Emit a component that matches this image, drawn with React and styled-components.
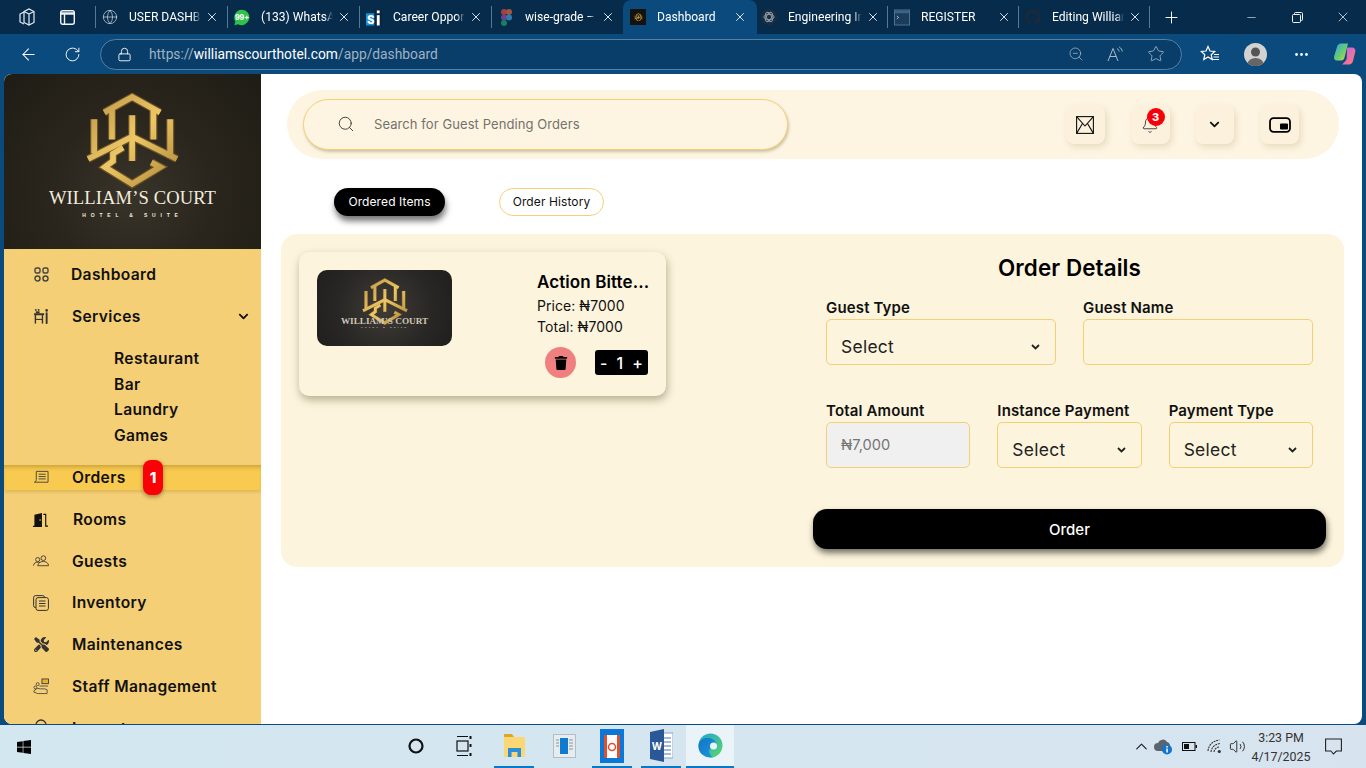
import React from "react";
import styled, { createGlobalStyle } from "styled-components";
import { ArrowLeft, RotateCw, Lock, ZoomOut, Star, Plus, X, Minus, Search, Bell, ChevronUp, Volume2, Globe, Ellipsis } from "lucide-react";
import { FaChevronDown, FaTrash, FaTools, FaWindows, FaGithub } from "react-icons/fa";

const Global = createGlobalStyle`
  html, body { margin: 0; padding: 0; height: 100%; overflow: hidden; }
  * { box-sizing: border-box; }
  body { font-family: Inter, "Liberation Sans", sans-serif; color: #000; }
`;

const Screen = styled.div`
  width: 1366px; height: 768px; display: flex; flex-direction: column; overflow: hidden;
`;

/* ---------- browser chrome ---------- */
const TabStrip = styled.div`
  height: 34px; background: #072b4b; display: flex; align-items: center; color: #fff; flex: none;
`;
const StripTool = styled.div`
  width: ${p => p.$w}px; height: 34px; flex: none; display: flex; align-items: center; justify-content: center;
`;
const Tab = styled.div`
  width: ${p => p.$w}px; height: ${p => (p.$active ? 34 : 22)}px; flex: none;
  display: flex; align-items: center; padding-left: ${p => (p.$active ? 7 : p.$plain ? 4 : 6)}px;
  background: ${p => (p.$active ? "#0b4a7c" : "transparent")};
  border-left: ${p => (p.$active || p.$plain ? "none" : "1px solid #557a98")};
  border-radius: ${p => (p.$active ? "8px 8px 0 0" : "0")};
  font: 12.1px Roboto, sans-serif;
`;
const TabIcon = styled.div`
  width: 16px; height: 16px; flex: none; display: flex; align-items: center; justify-content: center;
  background: ${p => (p.$dark ? "#14120e" : "transparent")};
`;
const TabTitle = styled.div`
  margin-left: 11px; width: ${p => (p.$plain ? 74 : 72)}px; flex: none; white-space: nowrap; overflow: hidden;
  -webkit-mask-image: linear-gradient(90deg, #000 88%, transparent);
  mask-image: linear-gradient(90deg, #000 88%, transparent);
`;
const TabClose = styled.div`
  margin-left: 4px; display: flex; color: #e8eef3;
`;
const NewTab = styled.div`
  width: 44px; height: 22px; flex: none; border-left: 1px solid #557a98; display: flex; align-items: center; justify-content: center;
`;
const WindowControls = styled.div`
  margin-left: auto; display: flex; flex: none;
`;
const WinBtn = styled.div`
  width: 46px; height: 34px; display: flex; align-items: center; justify-content: center; color: #f2f5f8;
`;
const Toolbar = styled.div`
  height: 40px; background: #0b4a7c; display: flex; align-items: center; color: #fff; flex: none;
`;
const ToolButton = styled.div`
  width: ${p => p.$w}px; flex: none; display: flex; justify-content: center; align-items: center; color: ${p => p.$c || "#fff"};
`;
const AddressBar = styled.div`
  width: 1082px; height: 31px; flex: none; border: 1px solid #55809f; border-radius: 16px; background: #093e6a;
  display: flex; align-items: center; padding-left: 16px; color: #c8d4dd;
`;
const Url = styled.div`
  margin-left: 17px; font: 13.8px Roboto, sans-serif; color: #9fb2c1; flex: 1;
  b { font-weight: 400; color: #fff; }
`;
const Avatar = styled.div`
  width: 23px; height: 23px; border-radius: 50%; background: #d2d2d2; overflow: hidden; display: flex;
`;

/* ---------- page ---------- */
const Viewport = styled.div`
  height: 651px; flex: none; background: #0b4a7c; padding: 0 4px 1px; display: flex;
`;
const Page = styled.div`
  flex: 1; background: #fff; display: flex; border-radius: 8px; overflow: hidden;
`;
const Sidebar = styled.aside`
  width: 257px; flex: none; background: #f5cf75; overflow: hidden; display: flex; flex-direction: column;
`;
const Brand = styled.div`
  height: 175px; flex: none; display: flex; flex-direction: column; align-items: center;
  background: radial-gradient(circle at 50% 68%, #39342a 0%, #2a261d 45%, #1f1c15 100%);
  padding-top: 15px; color: #f2ecdd;
`;
const BrandName = styled.div`
  font: 18.6px/20px "Liberation Serif", serif; margin-top: -2px; white-space: nowrap; letter-spacing: .1px;
`;
const BrandSub = styled.div`
  font: bold 5px/8px "Liberation Sans", sans-serif; letter-spacing: 4.8px; margin-top: 3px;
`;
const Nav = styled.nav`
  padding-top: 4px; display: flex; flex-direction: column; flex: none;
`;
const NavRow = styled.div`
  position: relative; flex: none; height: ${p => (p.$active ? "25px" : p.$tight ? "41.7px" : "42px")};
  margin: ${p => (p.$active ? "16px 0 9px" : "0")};
  display: flex; align-items: center; padding-left: 29px;
  background: ${p => (p.$active ? "#f8ca50" : "transparent")};
  box-shadow: ${p => (p.$active ? "inset 0 4px 4px -2px rgba(90,70,0,.3), 0 2px 3px rgba(120,90,0,.2)" : "none")};
`;
const NavIcon = styled.div`
  width: 16px; height: 18px; flex: none; display: flex; align-items: center; justify-content: center; color: #333;
`;
const NavLabel = styled.div`
  margin-left: ${p => p.$ml || 23}px; font-weight: 600; font-size: 15.6px; letter-spacing: .35px; white-space: nowrap; color: #111;
`;
const NavCaret = styled.div`
  margin-left: auto; margin-right: 12px; display: flex; color: #111;
`;
const SubList = styled.div`
  margin-top: 9px; padding-left: 110px; display: flex; flex-direction: column;
`;
const SubItem = styled.div`
  height: 25.7px; line-height: 25.7px; font-weight: 600; font-size: 15.6px; letter-spacing: .35px; color: #111;
`;
const NavBadge = styled.div`
  position: absolute; left: 139px; top: -5px; width: 20px; height: 35px; border-radius: 8px; background: #fb0007;
  color: #fff; font-weight: 800; font-size: 15px; display: flex; align-items: center; justify-content: center;
  box-shadow: 0 2px 4px rgba(60,40,0,.45);
`;

const Main = styled.main`
  flex: 1; min-width: 0; padding-top: 16px; display: flex; flex-direction: column;
`;
const TopBar = styled.div`
  width: 1052px; height: 69px; margin-left: 26px; flex: none; border-radius: 35px; background: #fdf5e2;
  display: flex; align-items: center; padding: 0 40px 0 16px;
`;
const SearchBox = styled.div`
  width: 485px; height: 51px; flex: none; border-radius: 26px; background: #fdf5e2; border: 1px solid #f5cf75;
  box-shadow: 1px 2px 3px rgba(120,100,50,.35); display: flex; align-items: center; padding: 0 0 1px 33px; color: #333;
`;
const SearchText = styled.div`
  margin-left: 19px; font-size: 13px; color: #74726c; letter-spacing: .08px;
`;
const TopIcons = styled.div`
  margin-left: auto; display: flex; gap: 25.7px;
`;
const TopIcon = styled.div`
  position: relative; width: 39px; height: 39px; border-radius: 8px; background: #fbf1dd;
  box-shadow: 2px 3px 6px rgba(160,130,70,.22); display: flex; align-items: center; justify-content: center; color: #111;
`;
const BellBadge = styled.div`
  position: absolute; right: 5px; top: 3px; width: 18px; height: 18px; border-radius: 50%; background: #f5010a;
  color: #fff; font-weight: 800; font-size: 11px; display: flex; align-items: center; justify-content: center;
`;
const Tabs = styled.div`
  margin-top: 29px; padding-left: 73px; display: flex; gap: 54px; flex: none;
`;
const TabPill = styled.div`
  height: 28px; width: ${p => p.$w}px; border-radius: 15px; font-size: 12px; padding-bottom: 2px; letter-spacing: .1px;
  display: flex; align-items: center; justify-content: center;
  background: ${p => (p.$on ? "#000" : "#fff")}; color: ${p => (p.$on ? "#fff" : "#111")};
  border: ${p => (p.$on ? "none" : "1px solid #f5cf75")};
  box-shadow: ${p => (p.$on ? "1px 5px 6px rgba(0,0,0,.55)" : "none")};
`;
const Panel = styled.section`
  width: 1063px; height: 333px; margin: 18px 0 0 20px; flex: none; background: #fcf4dc; border-radius: 16px;
  padding: 18px; display: flex; align-items: flex-start;
`;
const Card = styled.article`
  width: 367px; height: 144px; flex: none; background: #fcf4dc; border-radius: 10px; padding: 18px; display: flex;
  box-shadow: 1px 4px 8px rgba(70,60,30,.38);
`;
const Thumb = styled.div`
  width: 135px; height: 76px; flex: none; border-radius: 10px; color: #cfc7b6; overflow: hidden;
  background: radial-gradient(circle at 50% 50%, #3f3c38 0%, #292725 60%, #201f1d 100%);
  display: flex; flex-direction: column; align-items: center; padding-top: 6px;
`;
const ThumbName = styled.div`
  font: bold 9.2px/9px "Liberation Serif", serif; white-space: nowrap; margin-top: -9px;
`;
const ThumbSub = styled.div`
  font: bold 2.5px/4px "Liberation Sans", sans-serif; letter-spacing: 2.2px; margin-top: 0;
`;
const ItemInfo = styled.div`
  margin-left: 85px; width: 115px; flex: none; display: flex; flex-direction: column;
`;
const ItemName = styled.div`
  font-size: 17px; font-weight: 600; line-height: 25px; white-space: nowrap; letter-spacing: .1px;
`;
const ItemLine = styled.div`
  font-size: 14px; line-height: 21px; white-space: nowrap; color: #111; letter-spacing: .05px;
`;
const ItemActions = styled.div`
  margin-top: 10px; padding-left: 8px; display: flex; align-items: center; gap: 19px;
`;
const DeleteBtn = styled.div`
  width: 31px; height: 31px; flex: none; border-radius: 50%; background: #f07f7f; display: flex; align-items: center; justify-content: center; color: #000;
`;
const Stepper = styled.div`
  width: 53px; height: 25px; flex: none; border-radius: 3px; background: #000; color: #fff; font-size: 16px; font-weight: 500;
  display: flex; align-items: center; justify-content: space-between; padding: 0 5px;
`;
const OrderForm = styled.form`
  width: 513px; margin-left: 147px; flex: none; display: flex; flex-direction: column; margin-bottom: 0;
`;
const FormTitle = styled.h2`
  margin: 0 0 13px; font-size: 22.4px; line-height: 32px; font-weight: 600; text-align: center; letter-spacing: .1px;
`;
const FieldRow = styled.div`
  display: grid; grid-template-columns: repeat(${p => p.$cols}, 1fr); gap: 27px; padding: 0 13px; margin-bottom: ${p => p.$mb}px;
`;
const Field = styled.div`
  display: flex; flex-direction: column; min-width: 0;
`;
const FieldLabel = styled.div`
  height: 22px; font-size: 15px; line-height: 22.6px; font-weight: 600; white-space: nowrap; color: #111; letter-spacing: .15px;
`;
const SelectBox = styled.div`
  height: 46px; border: 1px solid #f5cf75; border-radius: 5px; display: flex; align-items: flex-end; justify-content: space-between;
  padding: 0 15px 5px 14px; font-size: 17.4px; line-height: 24px; color: #222; letter-spacing: .3px;
  svg { margin-bottom: 9px; }
`;
const TextBox = styled.div`
  height: 46px; border: 1px solid #f5cf75; border-radius: 5px; display: flex; align-items: center; padding-left: 14px;
  font-size: 14.6px; color: #757575; background: ${p => (p.$off ? "#f0f0f0" : "transparent")};
`;
const OrderBtn = styled.div`
  height: 40px; border-radius: 14px; background: #000; color: #fff; font-size: 15px; font-weight: 500;
  display: flex; align-items: center; justify-content: center; box-shadow: 1px 4px 6px rgba(0,0,0,.55);
`;

/* ---------- taskbar ---------- */
const Taskbar = styled.footer`
  height: 43px; flex: none; background: linear-gradient(90deg, #d2e7f0, #d7e4ef); display: flex; align-items: stretch; padding-left: 16px;
`;
const StartBtn = styled.div`
  width: 376px; flex: none; display: flex; align-items: center; color: #000;
`;
const Slot = styled.div`
  width: ${p => p.$w || 40}px; margin-left: ${p => p.$ml || 0}px; flex: none; display: flex; align-items: center; justify-content: center;
  border-bottom: 2px solid ${p => (p.$open ? "#0a78c8" : "transparent")};
  background: ${p => (p.$on ? "#eaf3f8" : "transparent")};
`;
const Tray = styled.div`
  margin-left: auto; padding-right: 20px; display: flex; align-items: center; color: #222;
`;
const TrayItem = styled.div`
  width: ${p => p.$w}px; flex: none; display: flex; justify-content: center; align-items: center;
`;
const Clock = styled.div`
  width: 78px; margin-left: -4px; flex: none; text-align: center; font: 12.4px/19px Roboto, sans-serif; color: #333;
`;

/* ---------- drawings ---------- */
const emblemPaths = [
  "M72 70 L155 24 L238 70",
  "M95 58 V150",
  "M218 58 V150",
  "M155 78 V214",
  "M42 90 V192",
  "M268 90 V204",
  "M24 208 L155 142 L288 208",
  "M128 174 L98 192 V214 L74 232 L155 282 L238 232 L212 218",
];
const Emblem = ({ size, id }) => (
  <svg width={size} height={size * 300 / 312} viewBox="0 0 312 300" fill="none">
    <defs>
      <linearGradient id={id} gradientUnits="userSpaceOnUse" x1="20" y1="20" x2="290" y2="290">
        <stop offset="0" stopColor="#b99449" />
        <stop offset=".5" stopColor="#edc765" />
        <stop offset="1" stopColor="#a98539" />
      </linearGradient>
    </defs>
    <g strokeLinejoin="miter" strokeLinecap="butt">
      {emblemPaths.map(d => <path key={d} d={d} stroke="#6d5222" strokeWidth="24" />)}
      {emblemPaths.map(d => <path key={d} d={d} stroke={`url(#${id})`} strokeWidth="17" />)}
    </g>
  </svg>
);

const TabX = () => <X size={14} strokeWidth={1.6} />;
const WhatsApp = () => (
  <svg width="17" height="17" viewBox="0 0 17 17"><path d="M8.500 .2a8.200 8.200 0 0 0-7 12.500L.4 16.800l4-1.100A8.200 8.200 0 1 0 8.500.2z" fill="#2fc24a" /><text x="8.500" y="11" fontSize="7.500" fontWeight="800" textAnchor="middle" fill="#fff" fontFamily="Inter">99+</text></svg>
);
const SiIcon = () => (
  <svg width="17" height="17" viewBox="0 0 17 17"><rect x="0" y="4" width="9" height="13" fill="#1b8fd6" /><rect x="9" y="0" width="8" height="17" fill="#0a2540" /><text x="1" y="15" fontSize="12" fontWeight="800" fill="#fff" fontFamily="Inter">S</text><rect x="11.500" y="6" width="3" height="11" fill="#fff" /><rect x="11.500" y="1" width="3" height="3" fill="#fff" /></svg>
);
const FigmaIcon = () => (
  <svg width="11" height="17" viewBox="0 0 11 17"><circle cx="3" cy="3" r="3" fill="#a3423a" /><circle cx="8" cy="3" r="3" fill="#a3563f" /><circle cx="3" cy="8.500" r="3" fill="#6a3f9a" /><circle cx="8" cy="8.500" r="3" fill="#2f7da8" /><circle cx="3" cy="14" r="3" fill="#1a8060" /></svg>
);
const TermIcon = () => (
  <svg width="17" height="17" viewBox="0 0 17 17"><rect x=".5" y=".5" width="16" height="16" fill="#1c3c5c" stroke="#4d7595" /><rect x="1" y="1" width="15" height="3" fill="#3d6484" /><path d="M3 7l2 1.500-2 1.500" stroke="#c6d4df" fill="none" strokeWidth=".8" /></svg>
);
const GptIcon = () => (
  <svg width="16" height="16" viewBox="0 0 16 16"><circle cx="8" cy="8" r="8" fill="#1a2e42" /><g fill="none" stroke="#8d99a4" strokeWidth="1"><ellipse cx="8" cy="8" rx="5" ry="2.600" /><ellipse cx="8" cy="8" rx="5" ry="2.600" transform="rotate(60 8 8)" /><ellipse cx="8" cy="8" rx="5" ry="2.600" transform="rotate(120 8 8)" /></g></svg>
);
const TabsIcon = () => (
  <svg width="18" height="20" viewBox="0 0 18 20" fill="none" stroke="#e6edf2" strokeWidth="1.200"><path d="M6 4.500 11 2l5 2.500v11L11 18l-5-2.500z" /><path d="M11 7l5-2.500M11 7v11M11 7L6 4.500" /><path d="M6 5L2 7v8l4 2" /></svg>
);
const WorkspaceIcon = () => (
  <svg width="15" height="15" viewBox="0 0 15 15" fill="none" stroke="#f2f5f8" strokeWidth="1.400"><rect x=".7" y=".7" width="13.600" height="13.600" rx="2" /><path d="M.7 3.500h13.600" strokeWidth="2.400" /><path d="M4.500 3.500v10.800" /></svg>
);
const ReadAloud = () => (
  <svg width="18" height="17" viewBox="0 0 18 17" fill="none" stroke="#a9bac7" strokeWidth="1"><path d="M1 15L6 2.500 11 15M2.800 10.500h6.400" /><path d="M10 2.500c1.300.8 2 1.800 2 3M12.200 1c1.800 1 3 2.700 3 4.500" /></svg>
);
const FavStar = () => (
  <svg width="20" height="18" viewBox="0 0 20 18" fill="none" stroke="#fff" strokeWidth="1.200"><path d="M8 1.500l2 4.500 4.700.5-3.500 3.200 1 4.800L8 12l-4.200 2.500 1-4.800L1.300 6.500 6 6z" /><path d="M14 9.500h5M13.500 12h5.500M12.500 14.500H19" /></svg>
);
const Copilot = () => (
  <svg width="24" height="24" viewBox="0 0 24 24">
    <defs>
      <linearGradient id="cpA" x1="0" y1="0" x2="1" y2="1"><stop offset="0" stopColor="#2aa7e8" /><stop offset=".6" stopColor="#6fcf6a" /><stop offset="1" stopColor="#f5d33f" /></linearGradient>
      <linearGradient id="cpB" x1="0" y1="0" x2="1" y2="1"><stop offset="0" stopColor="#a06be8" /><stop offset=".6" stopColor="#ef6fa8" /><stop offset="1" stopColor="#f78b4b" /></linearGradient>
    </defs>
    <path d="M8 1.500h7l-3.500 14c-.5 2-1.500 3-3.500 3H4C1.500 18.500.5 16.500 1.200 14L4 5c.6-2.300 2-3.500 4-3.500z" fill="url(#cpA)" />
    <path d="M14 5.500h5c2.200 0 3.800 1.800 3.300 4l-2.300 9.500c-.6 2.300-2 3.500-4 3.500H9l3-3c1-1 1.500-2 1.700-3z" fill="url(#cpB)" />
  </svg>
);
const DashIcon = () => (
  <svg width="15" height="15" viewBox="0 0 15 15" fill="none" stroke="#444" strokeWidth="1.400"><rect x="1" y="1" width="5" height="5" rx="1.500" /><rect x="9" y="1" width="5" height="5" rx="1.500" /><rect x="1" y="9" width="5" height="5" rx="2.500" /><rect x="9" y="9" width="5" height="5" rx="2.500" /></svg>
);
const ServicesIcon = () => (
  <svg width="17" height="17" viewBox="0 0 17 17" fill="#333"><circle cx="3" cy="1.500" r="1" /><circle cx="6" cy="1.500" r="1" /><circle cx="14.500" cy="2" r="1.400" /><rect x="1" y="5" width="11" height="2.200" rx=".8" /><rect x="1.800" y="7" width="1.500" height="9" /><rect x="9.300" y="7" width="1.500" height="9" /><rect x="13.500" y="4" width="2" height="12.500" rx=".8" /><rect x="3" y="3" width="4" height="2" /><rect x="3" y="11" width="6.500" height="1.200" /></svg>
);
const OrdersIcon = () => (
  <svg width="17" height="15" viewBox="0 0 17 15" fill="none" stroke="#444" strokeWidth="1"><path d="M3.500 1h12.500v11.500H1.500c1.500-.6 2-1.500 2-3z" /><path d="M6 4h7.500M6 6.500h7.500M6 9h7.500" /></svg>
);
const RoomsIcon = () => (
  <svg width="17" height="16" viewBox="0 0 17 16"><path d="M1.500 2.500L9.500.5v15H0V14h1.500z" fill="#111" /><circle cx="7.500" cy="8" r=".8" fill="#f5cf75" /><path d="M11 2h2.500v12.500H16" stroke="#111" strokeWidth="1.200" fill="none" /></svg>
);
const GuestsIcon = () => (
  <svg width="17" height="12" viewBox="0 0 17 12" fill="none" stroke="#333" strokeWidth=".9"><circle cx="5" cy="4.500" r="2.200" /><circle cx="11" cy="3" r="2.500" /><path d="M.5 11c.3-2.500 2-3.800 4.500-3.800 1 0 1.700.2 2.300.6M5 11c.5-3 2.800-4.500 6-4.500s5.200 1.500 5.500 4.500z" /></svg>
);
const InventoryIcon = () => (
  <svg width="16" height="16" viewBox="0 0 16 16" fill="none" stroke="#333" strokeWidth="1"><rect x=".6" y=".6" width="11" height="12" rx="2" /><rect x="3" y="2.600" width="12.400" height="12.800" rx="2" fill="#f5cf75" /><path d="M6 6h6.500M6 8.500h6.500M6 11h6.500" /></svg>
);
const StaffIcon = () => (
  <svg width="17" height="17" viewBox="0 0 17 17" fill="none" stroke="#444" strokeWidth=".9"><rect x="9.500" y=".5" width="7" height="5" fill="#e6b32e" stroke="#333" /><circle cx="5" cy="6" r="1.600" /><circle cx="2.500" cy="9.500" r="1.500" /><path d="M1 13l3.500-2.500L8 11h4.500l2.500 1v4H5l-4-1.500z" /><path d="M7 8h9" /></svg>
);
const LogoutIcon = () => (
  <svg width="16" height="18" viewBox="0 0 16 18" fill="none" stroke="#333" strokeWidth="1.300"><circle cx="8" cy="6" r="5" /></svg>
);
const MailIcon = () => (
  <svg width="18" height="18" viewBox="0 0 18 18" fill="none" stroke="#111" strokeWidth="1.100"><rect x=".6" y=".6" width="16.800" height="16.800" /><path d="M.6.600 9 10 17.400.6M.6 17.400 6.500 7.500M17.400 17.400 11.500 7.500" /></svg>
);
const PipIcon = () => (
  <svg width="22" height="16" viewBox="0 0 22 16" fill="none"><rect x="1" y="1.200" width="20" height="13.600" rx="3.500" stroke="#000" strokeWidth="1.800" /><rect x="11" y="6.500" width="8" height="6" rx="1" fill="#000" /></svg>
);
const SmallCaret = () => (
  <svg width="9" height="6" viewBox="0 0 9 6" fill="none" stroke="#222" strokeWidth="1.800"><path d="M1 1l3.500 3.500L8 1" /></svg>
);
const Explorer = () => (
  <svg width="23" height="25" viewBox="0 0 23 25"><path d="M1 1h8l2 3H1z" fill="#e0a526" /><rect x="1" y="4" width="21" height="20" fill="#f8d774" /><path d="M5 24v-9h13v9h-3.500v-5h-6v5z" fill="#2c8ed6" /></svg>
);
const Widgets = () => (
  <svg width="23" height="24" viewBox="0 0 23 24"><rect x=".5" y=".5" width="22" height="23" fill="#e6ecef" stroke="#b4bdc3" /><rect x="7" y="4" width="8" height="16" fill="#1079d0" /><path d="M3 6h3M3 9h3M3 12h3M16 6h4M16 9h4M16 12h4M16 15h4" stroke="#8795a0" /></svg>
);
const Slides = () => (
  <svg width="24" height="34" viewBox="0 0 24 34"><rect width="24" height="34" fill="#0a78d8" /><rect x="4" y="6" width="16" height="23" fill="#fff" /><rect x="4" y="6" width="3" height="23" fill="#e0512b" /><rect x="17" y="6" width="3" height="23" fill="#e0512b" /><circle cx="12" cy="18" r="3.500" fill="none" stroke="#e0512b" strokeWidth="1.500" /></svg>
);
const Word = () => (
  <svg width="23" height="33" viewBox="0 0 23 33"><rect x="9" y="4" width="14" height="25" fill="#fff" stroke="#8aa3c5" /><path d="M12 9h9M12 13h9M12 17h9M12 21h9M12 25h9" stroke="#4a76b4" /><path d="M0 3l14-3v33L0 30z" fill="#2b5697" /><text x="7" y="21" textAnchor="middle" fill="#fff" fontSize="10" fontWeight="700" fontFamily="Inter">W</text></svg>
);
const Edge = () => (
  <svg width="25" height="25" viewBox="0 0 25 25">
    <defs>
      <linearGradient id="edA" x1="0" y1="0" x2="1" y2="1"><stop offset="0" stopColor="#1fa4d8" /><stop offset="1" stopColor="#5bd66b" /></linearGradient>
      <linearGradient id="edB" x1="0" y1="0" x2="1" y2="1"><stop offset="0" stopColor="#1273c4" /><stop offset="1" stopColor="#1d9be0" /></linearGradient>
    </defs>
    <circle cx="12.500" cy="12.500" r="12" fill="url(#edA)" />
    <path d="M.5 12.500C1 7 6 4.500 10.500 5c5 .5 8 3.500 8 7 0 2-1.500 3-3.500 3-3 0-5 2-3 6 1 1.500 2 3 3.500 3.500C6 25 0 20 .5 12.500z" fill="url(#edB)" />
    <circle cx="15.500" cy="13" r="3.500" fill="#eaf3f8" />
  </svg>
);
const CloudInfo = () => (
  <svg width="20" height="18" viewBox="0 0 20 18"><path d="M4 13a4 4 0 0 1 0-8 5 5 0 0 1 9-1 4 4 0 0 1 3 4H10v5z" fill="#59646c" /><circle cx="13" cy="11.500" r="5" fill="#1573c9" /><rect x="12.300" y="10.500" width="1.500" height="4" fill="#fff" /><rect x="12.300" y="8" width="1.500" height="1.500" fill="#fff" /></svg>
);
const Battery = () => (
  <svg width="15" height="9" viewBox="0 0 15 9"><rect x=".5" y=".5" width="12.500" height="8" fill="none" stroke="#111" /><rect x="2" y="2" width="5" height="5" fill="#111" /><rect x="13.500" y="3" width="1.500" height="3" fill="#111" /></svg>
);
const WifiArcs = () => (
  <svg width="16" height="15" viewBox="0 0 16 15" fill="none" stroke="#333" strokeWidth="1.100" strokeDasharray="2 .8"><path d="M1 12C1.500 6 6 1.500 12.500 1" /><path d="M4 13C4.500 8.500 8 5 13 4.500" /><path d="M7 13c.2-2.500 2.200-4.600 5-5" /><circle cx="12.300" cy="12.500" r="1.600" fill="#333" stroke="none" /></svg>
);
const Notify = () => (
  <svg width="17" height="17" viewBox="0 0 17 17" fill="none" stroke="#222" strokeWidth="1.100"><path d="M.6 1h15.800v12h-5l-3 3-2.500-3H.6z" /></svg>
);

const tabs = [
  { w: 132, icon: <Globe size={16} strokeWidth={1.100} color="#c8d6e0" />, title: "USER DASHBOARD" },
  { w: 132, icon: <WhatsApp />, title: "(133) WhatsApp" },
  { w: 132, icon: <SiIcon />, title: "Career Opportunities" },
  { w: 132, icon: <FigmaIcon />, title: "wise-grade – Figma" },
  { w: 134, active: true, dark: true, icon: <Emblem size={9} id="fav" />, title: "Dashboard" },
  { w: 130, plain: true, icon: <GptIcon />, title: "Engineering Intern" },
  { w: 131, icon: <TermIcon />, title: "REGISTER" },
  { w: 131, icon: <FaGithub size={16} color="#1c2a38" />, title: "Editing William" },
];

const navTop = [
  { icon: <DashIcon />, label: "Dashboard", ml: 22 },
  { icon: <ServicesIcon />, label: "Services", caret: true },
];
const navBottom = [
  { icon: <RoomsIcon />, label: "Rooms", ml: 24 },
  { icon: <GuestsIcon />, label: "Guests" },
  { icon: <InventoryIcon />, label: "Inventory" },
  { icon: <FaTools size={15} color="#333" />, label: "Maintenances" },
  { icon: <StaffIcon />, label: "Staff Management" },
  { icon: <LogoutIcon />, label: "Logout" },
];

export default function App() {
  return (
    <Screen>
      <Global />
      <TabStrip>
        <StripTool $w={54}><TabsIcon /></StripTool>
        <StripTool $w={27}><WorkspaceIcon /></StripTool>
        <StripTool $w={14} />
        {tabs.map(t => (
          <Tab key={t.title} $w={t.w} $active={t.active} $plain={t.plain}>
            <TabIcon $dark={t.dark}>{t.icon}</TabIcon>
            <TabTitle $plain={t.plain}>{t.title}</TabTitle>
            <TabClose><TabX /></TabClose>
          </Tab>
        ))}
        <NewTab><Plus size={19} strokeWidth={1.200} /></NewTab>
        <WindowControls>
          <WinBtn><Minus size={13} strokeWidth={1.100} /></WinBtn>
          <WinBtn>
            <svg width="11" height="11" viewBox="0 0 11 11" fill="none" stroke="#f2f5f8"><rect x=".5" y="2.500" width="8" height="8" rx="1" /><path d="M2.500 2.500V1.500a1 1 0 0 1 1-1h6a1 1 0 0 1 1 1v6a1 1 0 0 1-1 1h-1" /></svg>
          </WinBtn>
          <WinBtn><X size={16} strokeWidth={1.100} /></WinBtn>
        </WindowControls>
      </TabStrip>
      <Toolbar>
        <ToolButton $w={56}><ArrowLeft size={19} strokeWidth={1.300} /></ToolButton>
        <ToolButton $w={32}><RotateCw size={17} strokeWidth={1.300} /></ToolButton>
        <ToolButton $w={12} />
        <AddressBar>
          <Lock size={15} strokeWidth={1.400} color="#fff" />
          <Url>https://<b>williamscourthotel.com</b>/app/dashboard</Url>
          <ToolButton $w={40} $c="#a9bac7"><ZoomOut size={16} strokeWidth={1.100} /></ToolButton>
          <ToolButton $w={40}><ReadAloud /></ToolButton>
          <ToolButton $w={40} $c="#a9bac7"><Star size={18} strokeWidth={1.100} /></ToolButton>
          <ToolButton $w={5} />
        </AddressBar>
        <ToolButton $w={55}><FavStar /></ToolButton>
        <ToolButton $w={36}>
          <Avatar>
            <svg width="23" height="23" viewBox="0 0 23 23"><circle cx="11.500" cy="9" r="4.500" fill="#555" /><ellipse cx="11.500" cy="21" rx="8" ry="6" fill="#666" /></svg>
          </Avatar>
        </ToolButton>
        <ToolButton $w={57}><Ellipsis size={17} /></ToolButton>
        <ToolButton $w={29}><Copilot /></ToolButton>
      </Toolbar>

      <Viewport>
        <Page>
          <Sidebar>
            <Brand>
              <Emblem size={105} id="brand" />
              <BrandName>WILLIAM’S COURT</BrandName>
              <BrandSub>HOTEL &amp; SUITE</BrandSub>
            </Brand>
            <Nav>
              {navTop.map(n => (
                <NavRow key={n.label}>
                  <NavIcon>{n.icon}</NavIcon>
                  <NavLabel $ml={n.ml}>{n.label}</NavLabel>
                  {n.caret && <NavCaret><FaChevronDown size={11} /></NavCaret>}
                </NavRow>
              ))}
              <SubList>
                {["Restaurant", "Bar", "Laundry", "Games"].map(s => <SubItem key={s}>{s}</SubItem>)}
              </SubList>
              <NavRow $active>
                <NavIcon><OrdersIcon /></NavIcon>
                <NavLabel>Orders</NavLabel>
                <NavBadge>1</NavBadge>
              </NavRow>
              {navBottom.map(n => (
                <NavRow key={n.label} $tight>
                  <NavIcon>{n.icon}</NavIcon>
                  <NavLabel $ml={n.ml}>{n.label}</NavLabel>
                </NavRow>
              ))}
            </Nav>
          </Sidebar>
          <Main>
            <TopBar>
              <SearchBox>
                <Search size={18} strokeWidth={1.200} />
                <SearchText>Search for Guest Pending Orders</SearchText>
              </SearchBox>
              <TopIcons>
                <TopIcon><MailIcon /></TopIcon>
                <TopIcon>
                  <Bell size={18} strokeWidth={1} />
                  <BellBadge>3</BellBadge>
                </TopIcon>
                <TopIcon><FaChevronDown size={11} /></TopIcon>
                <TopIcon><PipIcon /></TopIcon>
              </TopIcons>
            </TopBar>
            <Tabs>
              <TabPill $on $w={111}>Ordered Items</TabPill>
              <TabPill $w={105}>Order History</TabPill>
            </Tabs>
            <Panel>
              <Card>
                <Thumb>
                  <Emblem size={52} id="thumb" />
                  <ThumbName>WILLIAM’S COURT</ThumbName>
                  <ThumbSub>HOTEL &amp; SUITE</ThumbSub>
                </Thumb>
                <ItemInfo>
                  <ItemName>Action Bitte...</ItemName>
                  <ItemLine>Price: ₦7000</ItemLine>
                  <ItemLine>Total: ₦7000</ItemLine>
                  <ItemActions>
                    <DeleteBtn><FaTrash size={14} /></DeleteBtn>
                    <Stepper><span>-</span><span>1</span><span>+</span></Stepper>
                  </ItemActions>
                </ItemInfo>
              </Card>
              <OrderForm>
                <FormTitle>Order Details</FormTitle>
                <FieldRow $cols={2} $mb={35}>
                  <Field>
                    <FieldLabel>Guest Type</FieldLabel>
                    <SelectBox>Select<SmallCaret /></SelectBox>
                  </Field>
                  <Field>
                    <FieldLabel>Guest Name</FieldLabel>
                    <TextBox />
                  </Field>
                </FieldRow>
                <FieldRow $cols={3} $mb={41}>
                  <Field>
                    <FieldLabel>Total Amount</FieldLabel>
                    <TextBox $off>₦7,000</TextBox>
                  </Field>
                  <Field>
                    <FieldLabel>Instance Payment</FieldLabel>
                    <SelectBox>Select<SmallCaret /></SelectBox>
                  </Field>
                  <Field>
                    <FieldLabel>Payment Type</FieldLabel>
                    <SelectBox>Select<SmallCaret /></SelectBox>
                  </Field>
                </FieldRow>
                <OrderBtn>Order</OrderBtn>
              </OrderForm>
            </Panel>
          </Main>
        </Page>
      </Viewport>

      <Taskbar>
        <StartBtn><FaWindows size={16} /></StartBtn>
        <Slot $w={48}>
          <svg width="16" height="16" viewBox="0 0 16 16" fill="none" stroke="#111" strokeWidth="2.200"><circle cx="8" cy="8" r="6.500" /></svg>
        </Slot>
        <Slot $w={47}>
          <svg width="16" height="22" viewBox="0 0 16 22" fill="none" stroke="#111" strokeWidth="1.200"><path d="M1 1.500h11M1 20.500h11" /><rect x="1" y="6" width="11" height="10" /><path d="M14.500 1v3M14.500 9v3M14.500 18v3" strokeWidth="2" /></svg>
        </Slot>
        <Slot $ml={7} $open><Explorer /></Slot>
        <Slot $ml={10}><Widgets /></Slot>
        <Slot $ml={8} $open><Slides /></Slot>
        <Slot $ml={9} $open><Word /></Slot>
        <Slot $w={48} $ml={5} $open $on><Edge /></Slot>
        <Tray>
          <TrayItem $w={22}><ChevronUp size={19} strokeWidth={1.500} /></TrayItem>
          <TrayItem $w={24}><CloudInfo /></TrayItem>
          <TrayItem $w={26}><Battery /></TrayItem>
          <TrayItem $w={26}><WifiArcs /></TrayItem>
          <TrayItem $w={18}><Volume2 size={17} strokeWidth={1.300} /></TrayItem>
          <Clock>3:23 PM<br />4/17/2025</Clock>
          <TrayItem $w={26}><Notify /></TrayItem>
        </Tray>
      </Taskbar>
    </Screen>
  );
}
